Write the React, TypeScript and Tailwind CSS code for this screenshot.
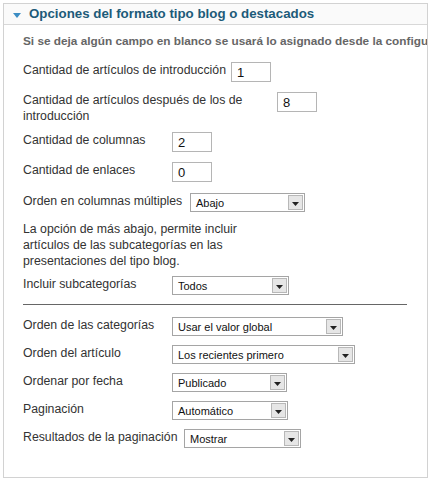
import type { ReactNode } from 'react';

const font = { fontFamily: '"Liberation Sans", Arial, sans-serif' };

function TextInput({ value, width = 'w-[40px]' }: { value: string; width?: string }) {
  return (
    <div className={`${width} h-[20px] shrink-0 border border-[#b5b5b5] bg-white pl-[5px] pt-[3px] text-[13px] leading-[14px] text-[#111]`}>
      {value}
    </div>
  );
}

function Select({ value, width }: { value: string; width: string }) {
  return (
    <div className={`${width} h-[19px] shrink-0 flex items-stretch border border-[#a5a5a5] bg-white p-px`}>
      <span className="flex-1 pl-[4px] text-[11px] leading-[16px] text-[#111] whitespace-nowrap overflow-hidden">{value}</span>
      <span className="w-[15px] flex items-center justify-center border border-[#b8b8b8] bg-[#e6e6e6]">
        <svg width="7" height="4" viewBox="0 0 7 4" className="mt-[2px]">
          <path d="M0 0h7L3.5 4z" fill="#222" />
        </svg>
      </span>
    </div>
  );
}

function Row({ label, children, mt, labelWidth = 'min-w-[144px]' }: { label: ReactNode; children: ReactNode; mt: string; labelWidth?: string }) {
  return (
    <div className={`flex items-start ${mt}`}>
      <label className={`${labelWidth} max-w-[249px] mr-[5px] text-[12.3px] leading-[16px] text-[#333]`}>{label}</label>
      {children}
    </div>
  );
}

export default function App() {
  return (
    <div className="w-[435px] h-[482px] bg-white pt-[3px] pl-[3px]" style={font}>
      <div className="w-[425px] h-[475px] border border-[#d2d2d2] overflow-hidden">
        <div className="h-[21px] flex items-center bg-[#fafafa] border-b border-[#d8d8d8] pl-[9px]">
          <svg width="8" height="5" viewBox="0 0 8 5" className="mr-[8px] mt-[2px]">
            <path d="M0 0h8L4 5z" fill="#3b8dc4" />
          </svg>
          <span className="text-[13.3px] font-bold text-[#1d5b79] leading-[16px]">Opciones del formato tipo blog o destacados</span>
        </div>

        <div className="pl-[19px] flex flex-col">
          <p className="mt-[8px] text-[11.8px] font-bold leading-[16px] text-[#666] whitespace-nowrap">
            Si se deja algún campo en blanco se usará lo asignado desde la configuración global
          </p>

          <Row label="Cantidad de artículos de introducción" mt="mt-[13px]">
            <TextInput value="1" />
          </Row>
          <Row label="Cantidad de artículos después de los de introducción" mt="mt-[10px]">
            <TextInput value="8" />
          </Row>
          <Row label="Cantidad de columnas" mt="mt-[8px]">
            <TextInput value="2" />
          </Row>
          <Row label="Cantidad de enlaces" mt="mt-[10px]">
            <TextInput value="0" />
          </Row>
          <Row label="Orden en columnas múltiples" mt="mt-[11px]" labelWidth="min-w-[162px]">
            <Select value="Abajo" width="w-[115px]" />
          </Row>

          <p className="mt-[9px] w-[225px] text-[12.3px] leading-[16px] text-[#333]">
            La opción de más abajo, permite incluir artículos de las subcategorías en las presentaciones del tipo blog.
          </p>

          <Row label="Incluir subcategorías" mt="mt-[7px]">
            <Select value="Todos" width="w-[117px]" />
          </Row>

          <div className="mt-[9px] mr-[20px] border-t border-[#666]" />

          <Row label="Orden de las categorías" mt="mt-[12px]">
            <Select value="Usar el valor global" width="w-[171px]" />
          </Row>
          <Row label="Orden del artículo" mt="mt-[9px]">
            <Select value="Los recientes primero" width="w-[183px]" />
          </Row>
          <Row label="Ordenar por fecha" mt="mt-[9px]">
            <Select value="Publicado" width="w-[115px]" />
          </Row>
          <Row label="Paginación" mt="mt-[9px]">
            <Select value="Automático" width="w-[116px]" />
          </Row>
          <Row label="Resultados de la paginación" mt="mt-[9px]" labelWidth="min-w-[156px]">
            <Select value="Mostrar" width="w-[117px]" />
          </Row>
        </div>
      </div>
    </div>
  );
}
